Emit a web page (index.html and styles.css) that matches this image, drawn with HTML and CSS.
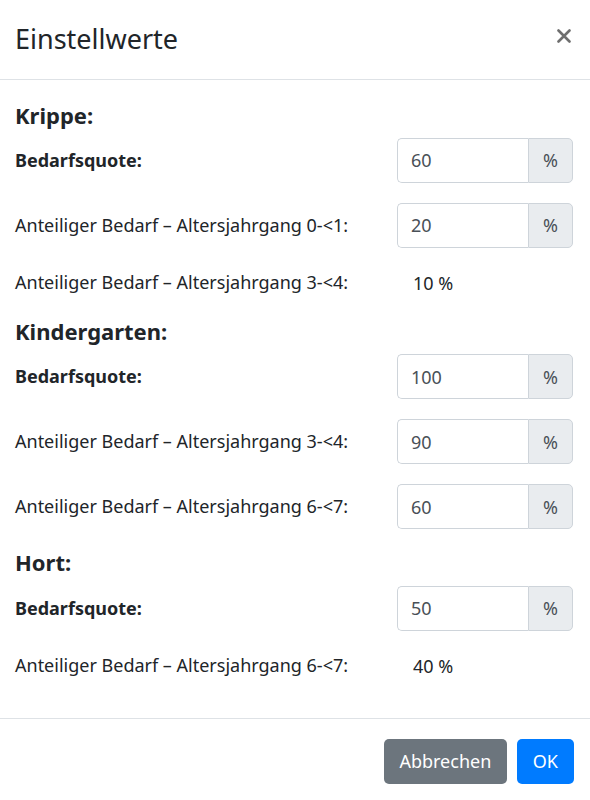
FILE: index.html
```
<!DOCTYPE html>
<html lang="de">
<head>
  <meta charset="UTF-8">
  <meta name="viewport" content="width=device-width, initial-scale=1.0">
  <title>Einstellwerte</title>
  <link rel="stylesheet" href="styles.css">
</head>
<body>
  <div class="modal-content">
    <div class="modal-header">
      <h4 class="modal-title">Einstellwerte</h4>
      <button type="button" class="close" aria-label="Close">
        <svg width="14" height="14" viewBox="0 0 14 14"><path d="M1.5 1.5 L12.5 12.5 M12.5 1.5 L1.5 12.5" stroke="#6f6f6f" stroke-width="2.6" stroke-linecap="round"/></svg>
      </button>
    </div>

    <div class="modal-body">
      <h5 class="section-title">Krippe:</h5>
      <div class="form-row">
        <label class="label-strong">Bedarfsquote:</label>
        <div class="input-group">
          <input type="text" class="form-control" value="60">
          <span class="input-group-text">%</span>
        </div>
      </div>
      <div class="form-row">
        <label>Anteiliger Bedarf – Altersjahrgang 0-&lt;1:</label>
        <div class="input-group">
          <input type="text" class="form-control" value="20">
          <span class="input-group-text">%</span>
        </div>
      </div>
      <div class="form-row text-row">
        <label>Anteiliger Bedarf – Altersjahrgang 3-&lt;4:</label>
        <div class="static-value">10 %</div>
      </div>

      <h5 class="section-title">Kindergarten:</h5>
      <div class="form-row">
        <label class="label-strong">Bedarfsquote:</label>
        <div class="input-group">
          <input type="text" class="form-control" value="100">
          <span class="input-group-text">%</span>
        </div>
      </div>
      <div class="form-row">
        <label>Anteiliger Bedarf – Altersjahrgang 3-&lt;4:</label>
        <div class="input-group">
          <input type="text" class="form-control" value="90">
          <span class="input-group-text">%</span>
        </div>
      </div>
      <div class="form-row">
        <label>Anteiliger Bedarf – Altersjahrgang 6-&lt;7:</label>
        <div class="input-group">
          <input type="text" class="form-control" value="60">
          <span class="input-group-text">%</span>
        </div>
      </div>

      <h5 class="section-title">Hort:</h5>
      <div class="form-row">
        <label class="label-strong">Bedarfsquote:</label>
        <div class="input-group">
          <input type="text" class="form-control" value="50">
          <span class="input-group-text">%</span>
        </div>
      </div>
      <div class="form-row text-row">
        <label>Anteiliger Bedarf – Altersjahrgang 6-&lt;7:</label>
        <div class="static-value">40 %</div>
      </div>
    </div>

    <div class="modal-footer">
      <button type="button" class="btn btn-secondary">Abbrechen</button>
      <button type="button" class="btn btn-primary">OK</button>
    </div>
  </div>
</body>
</html>
```

FILE: styles.css
```
body {
  margin: 0;
  padding: 0;
  font-family: "Noto Sans", "Open Sans", sans-serif;
  color: #212529;
  background-color: #fff;
}

.modal-content {
  width: 590px;
  background: #fff;
}

.modal-header {
  height: 79px;
  display: flex;
  align-items: center;
  justify-content: space-between;
  padding: 0 17px 0 15px;
  border-bottom: 1px solid #dee2e6;
}

.modal-title {
  margin: 0;
  font-size: 27px;
  font-weight: 400;
  line-height: 1.2;
}

.close {
  background: none;
  border: none;
  padding: 0;
  margin-top: -8px;
  width: 18px;
  height: 18px;
  display: flex;
  align-items: center;
  justify-content: center;
  cursor: pointer;
}

.modal-body {
  padding: 19px 17px 17px 15px;
}

.section-title {
  margin: 2.5px 0 10px;
  font-size: 22px;
  font-weight: 700;
  line-height: 1.2;
}

.form-row {
  display: flex;
  align-items: center;
  justify-content: space-between;
  margin-bottom: 20px;
}

.form-row label {
  font-size: 18px;
  line-height: 1.5;
}

.label-strong {
  font-weight: 700;
}

.text-row {
  height: 30px;
}

.static-value {
  width: 160px;
  font-size: 18px;
  color: #212529;
}

.input-group {
  display: flex;
  width: 176px;
  height: 45px;
}

.form-control {
  width: 131px;
  box-sizing: border-box;
  height: 45px;
  padding: 0 13px;
  font-family: inherit;
  font-size: 18px;
  color: #495057;
  border: 1px solid #ced4da;
  border-right: none;
  border-radius: 5px 0 0 5px;
  outline: none;
}

.input-group-text {
  width: 45px;
  box-sizing: border-box;
  display: flex;
  align-items: center;
  justify-content: center;
  font-size: 18px;
  color: #495057;
  background-color: #e9ecef;
  border: 1px solid #ced4da;
  border-radius: 0 5px 5px 0;
}

.modal-footer {
  display: flex;
  justify-content: flex-end;
  gap: 10px;
  padding: 20px 16px 16px;
  border-top: 1px solid #dee2e6;
}

.btn {
  height: 45px;
  padding: 0 15.5px;
  font-family: inherit;
  font-size: 18px;
  color: #fff;
  border: none;
  border-radius: 5px;
  cursor: pointer;
}

.btn-secondary {
  background-color: #6c757d;
}

.btn-primary {
  background-color: #007bff;
  padding: 0 16px;
}
```
